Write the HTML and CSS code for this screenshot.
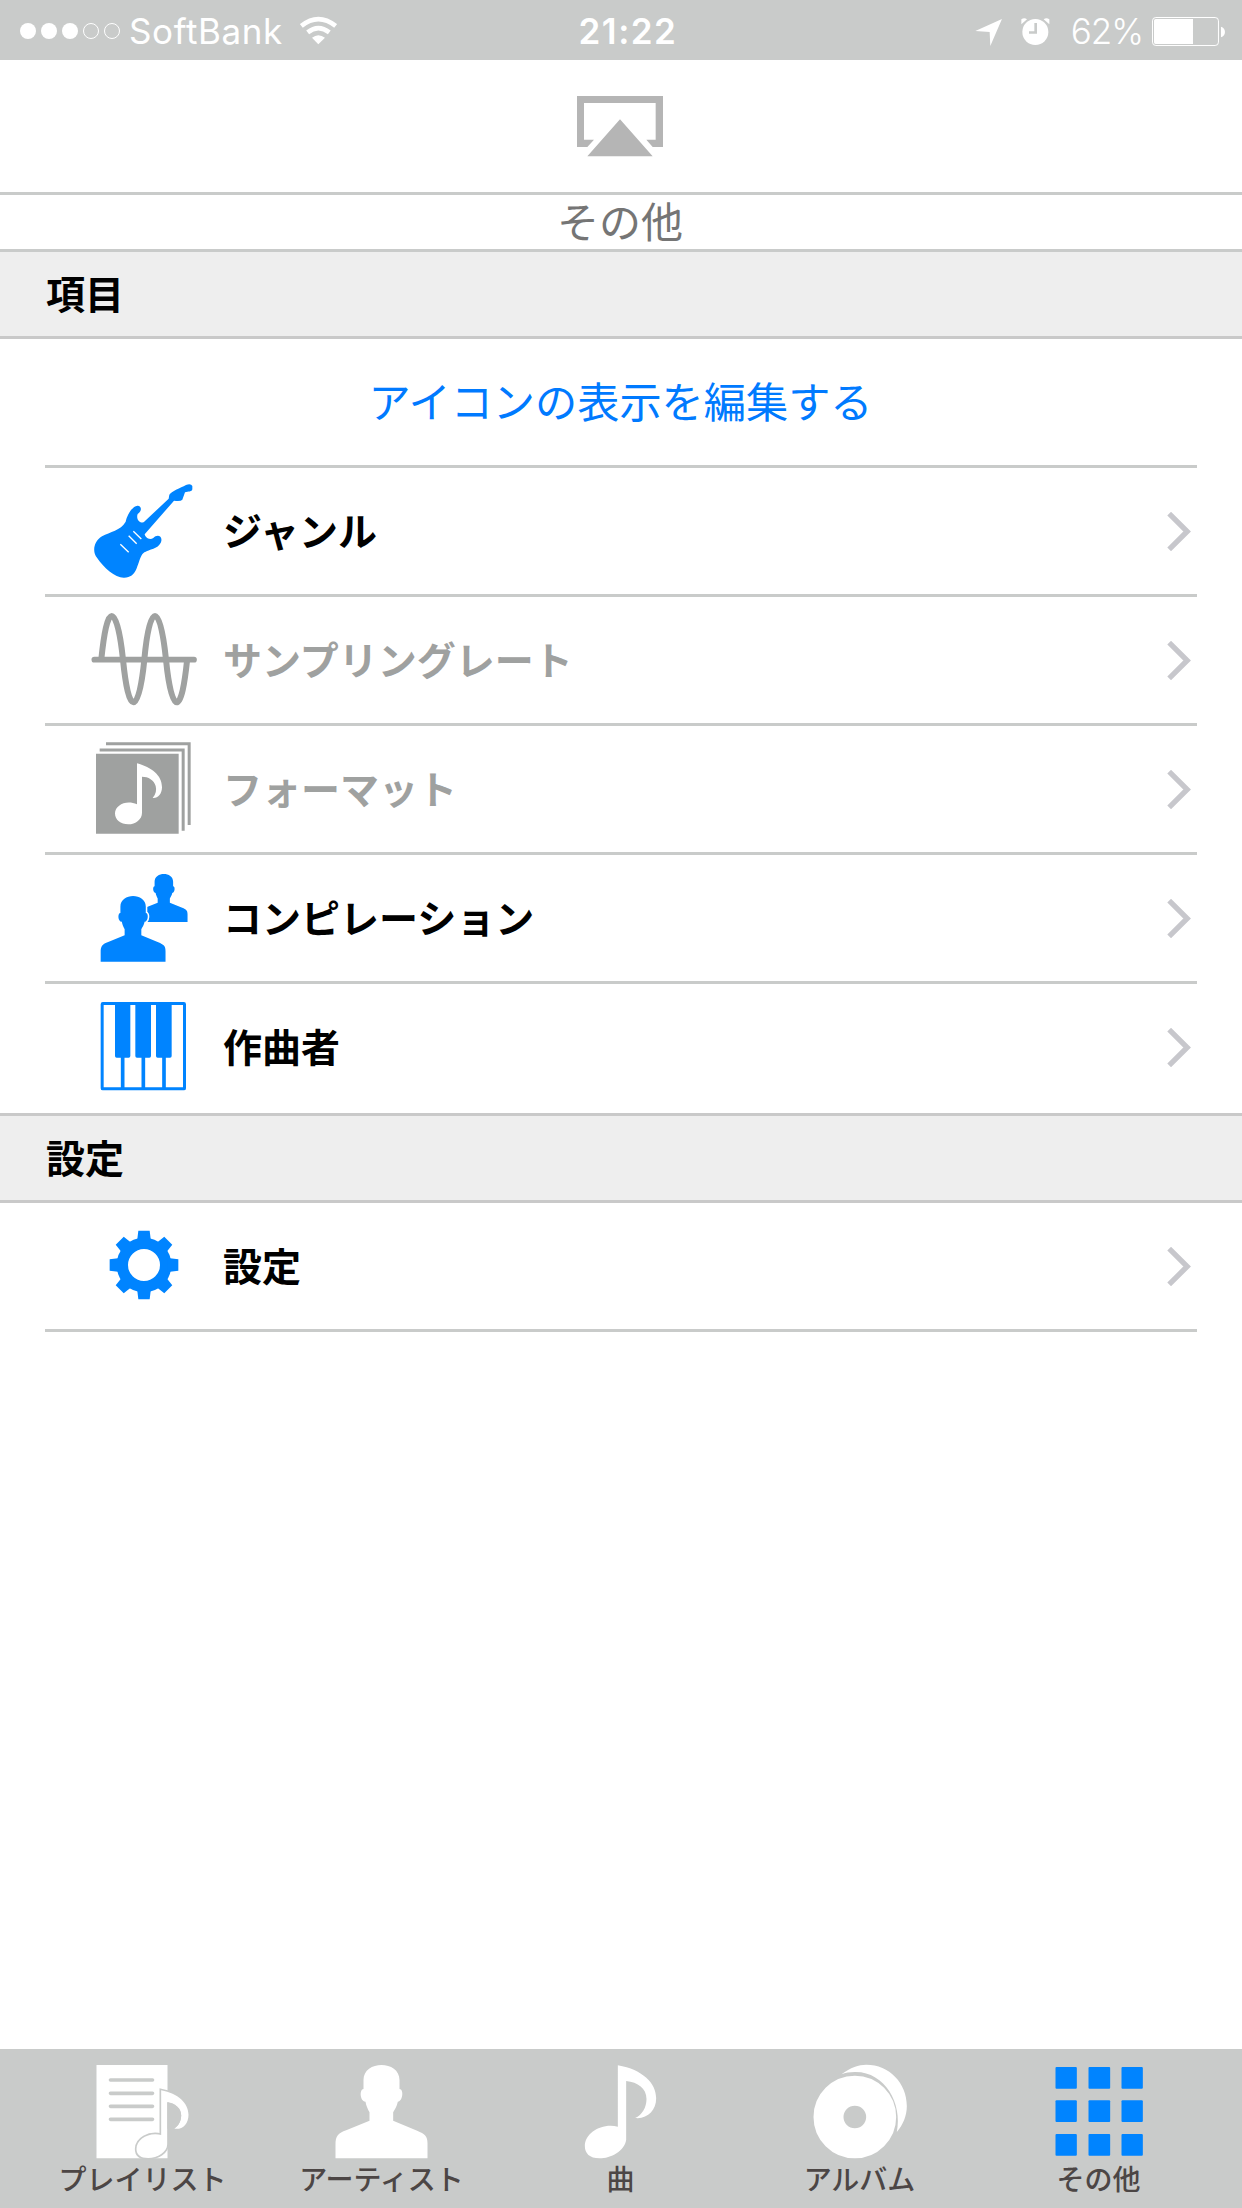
FILE: index.html
```html
<!DOCTYPE html>
<html lang="ja">
<head>
<meta charset="utf-8">
<title>その他</title>
<link rel="stylesheet" href="styles.css">
</head>
<body>
<svg class="defs" width="0" height="0" aria-hidden="true">
  <defs>
    <path id="person" d="M138 0C165 0 192 15 192 45V72C205 72 203 108 187 110C184 125 178 132 173 142V167L245 197C268 207 276 212 276 235V280H0V240C0 212 8 205 32 196L102 167V142C97 132 92 122 90 110C72 108 72 72 84 72V45C84 15 111 0 138 0Z"/>
    <path id="chevron" d="M147.500 161L201.500 214.500L147.500 268" fill="none" stroke="#c7c7cc" stroke-width="16"/>
  </defs>
</svg>
<div class="screen">
  <header class="status">
    <div class="status-left">
      <svg class="signal" viewBox="60 0 300 180"><g fill="#fff"><circle cx="84" cy="90" r="24"/><circle cx="147" cy="90" r="24"/><circle cx="210" cy="90" r="24"/></g><g fill="none" stroke="#fff" stroke-width="3"><circle cx="273" cy="90" r="22.500"/><circle cx="336" cy="90" r="22.500"/></g></svg>
      <span class="carrier">SoftBank</span>
      <svg class="wifi" viewBox="900 0 112 180"><g fill="none" stroke="#fff" stroke-width="14"><path d="M904 75Q955 34 1007 75"/><path d="M923 94Q955 69 988 94"/></g><path fill="#fff" d="M936 110Q955 95 975 110L955 130Z"/></svg>
    </div>
    <div class="time">21:22</div>
    <div class="status-right">
      <svg class="location" viewBox="225 0 82 180"><path fill="#fff" d="M306 54L226 90L269 93L271 135Z"/></svg>
      <svg class="alarm" viewBox="365 0 86 180"><g fill="#fff"><circle cx="408" cy="93" r="39"/><path d="M366 70V55Q375 48 383 55ZM450 70V55Q441 48 433 55Z"/></g><path d="M409 66V94.500H389" fill="none" stroke="#c9cbca" stroke-width="8"/></svg>
      <span class="percent">62%</span>
      <svg class="battery" viewBox="756 0 220 180"><rect x="757.500" y="49.500" width="198" height="84" rx="10" fill="none" stroke="#fff" stroke-width="3"/><path fill="#fff" d="M767 54H879V129H767Q762 129 762 124V59Q762 54 767 54ZM963 77Q975 81 975 93T963 109Z"/></svg>
    </div>
  </header>

  <div class="player">
    <svg class="airplay" viewBox="172 287 258 182"><path fill="#b5b5b5" d="M172 287H430V440H399L380 418H408V308H193V418H223L203 440H172ZM301 357L399 468H203Z"/></svg>
  </div>
  <h1 class="title">その他</h1>

  <h2 class="section">項目</h2>
  <ul class="list">
    <li class="row edit"><a class="link">アイコンの表示を編集する</a></li>
    <li class="row">
      <svg class="icon" viewBox="252 684 360 378"><path fill="#0084ff" d="M508 764L506 776L431 847C421 850 407 839 413 822C428 812 424 796 412 797C397 798 381 826 377 845C362 872 330 875 306 889C281 904 276 936 291 953C311 983 345 1013 371 1013C412 1014 410 974 425 946C435 926 477 932 484 903C487 886 470 883 460 894C447 902 435 891 434 883L522 782Q542 785 547 779L555 757C565 754 576 756 577 748V738Q573 730 558 735C540 744 517 753 508 764Z"/><path stroke="#fff" stroke-width="4" d="M361 913L386 937M386 887L410 911M400 874L424 897"/></svg>
      <span class="label">ジャンル</span><svg class="chevron" viewBox="141 156 72 117"><use href="#chevron"/></svg>
    </li>
    <li class="row disabled">
      <svg class="icon" viewBox="12 21 360 378"><g fill="none" stroke="#9fa1a0" stroke-linecap="round" stroke-linejoin="round"><path stroke-width="17" d="M43 209H342"/><path stroke-width="18" d="M64 207C72 130 82 78 95 78C110 78 122 140 129 209C137 290 148 337 160 337C175 337 186 280 193 209C200 130 211 78 225 78C240 78 251 140 258 209C266 290 278 337 290 337C304 337 314 280 321 213"/></g></svg>
      <span class="label">サンプリングレート</span><svg class="chevron" viewBox="141 156 72 117"><use href="#chevron"/></svg>
    </li>
    <li class="row disabled">
      <svg class="icon" viewBox="12 408 360 378"><path fill="#9fa1a0" d="M48 491H296V731H48Z"/><path fill="none" stroke="#9fa1a0" stroke-width="9" d="M78 461.500H327.500V705M59 480H309.500V722"/><path fill="#fff" d="M171 520C215 533 246 555 246 592C246 612 233 626 218 624C228 612 230 600 227 588C222 570 205 560 186 560V668C186 688 167 703 145 703C122 703 105 690 105 670C105 645 140 628 171 643Z"/></svg>
      <span class="label">フォーマット</span><svg class="chevron" viewBox="141 156 72 117"><use href="#chevron"/></svg>
    </li>
    <li class="row">
      <svg class="icon" viewBox="12 15 360 378"><clipPath id="back"><path d="M201 60H340V217H201Z"/></clipPath><g clip-path="url(#back)"><use href="#person" fill="#0084ff" transform="translate(180.500 72) scale(.515)"/></g><use href="#person" fill="#0084ff" stroke="#fff" stroke-width="13" paint-order="stroke" transform="translate(62 138) scale(.705)"/></svg>
      <span class="label">コンピレーション</span><svg class="chevron" viewBox="141 156 72 117"><use href="#chevron"/></svg>
    </li>
    <li class="row tall">
      <svg class="icon" viewBox="12 402 360 378"><g fill="none" stroke="#0084ff"><rect x="66.500" y="460.500" width="247" height="256" rx="2" stroke-width="9"/><path stroke-width="11" d="M128 620V716M190 620V716M252 620V716"/></g><path fill="#0084ff" d="M105 458H151V618Q151 623 146 623H110Q105 623 105 618ZM166 458H213V618Q213 623 208 623H171Q166 623 166 618ZM228 458H275V618Q275 623 270 623H233Q228 623 228 618Z"/></svg>
      <span class="label">作曲者</span><svg class="chevron" viewBox="141 156 72 117"><use href="#chevron"/></svg>
    </li>
  </ul>

  <h2 class="section">設定</h2>
  <ul class="list last">
    <li class="row">
      <svg class="icon" viewBox="252 309 360 378"><circle cx="432" cy="495" r="65" fill="none" stroke="#0084ff" stroke-width="34"/><g fill="#0084ff"><path id="tooth" d="M415 392H449L452 417L464 424H400L412 417Z"/><use href="#tooth" transform="rotate(45 432 495)"/><use href="#tooth" transform="rotate(90 432 495)"/><use href="#tooth" transform="rotate(135 432 495)"/><use href="#tooth" transform="rotate(180 432 495)"/><use href="#tooth" transform="rotate(225 432 495)"/><use href="#tooth" transform="rotate(270 432 495)"/><use href="#tooth" transform="rotate(315 432 495)"/></g></svg>
      <span class="label">設定</span><svg class="chevron" viewBox="141 156 72 117"><use href="#chevron"/></svg>
    </li>
  </ul>

  <nav class="tabs">
    <a class="tab">
      <svg class="tab-icon" viewBox="70.500 57 717 342"><path fill="#fff" d="M291 105H504V385H291Z"/><path stroke="#c9cbca" stroke-width="11" stroke-linecap="round" d="M333 150H459M333 190H459M333 229H459M333 268H459"/><path fill="#fff" stroke="#c9cbca" stroke-width="10" paint-order="stroke" d="M485 181C536 190 567 220 567 254C567 282 549 300 524 296C538 287 545 272 545 256C545 234 525 221 503 217V343C503 367 474 384 446 384C423 384 411 374 411 357C411 328 447 306 485 315Z"/><path fill="#c9cbca" d="M504 216C526 220 545 234 545 256C545 272 538 287 524 296H504Z"/></svg>
      <span>プレイリスト</span>
    </a>
    <a class="tab">
      <svg class="tab-icon" viewBox="787.500 57 717 342"><use href="#person" fill="#fff" transform="translate(1008 105)"/></svg>
      <span>アーティスト</span>
    </a>
    <a class="tab">
      <svg class="tab-icon" viewBox="4.500 57 717 342"><path fill="#fff" d="M355 106C430 119 470 160 470 205C470 242 443 268 407 264C428 255 441 232 441 207C441 175 415 157 380 153V329C376 362 334 385 300 385C270 385 256 370 256 348C256 310 305 278 355 290Z"/></svg>
      <span>曲</span>
    </a>
    <a class="tab">
      <svg class="tab-icon" viewBox="721.500 57 717 342"><path fill="#fff" d="M1026 133C1053 112 1078 104 1100 104C1170 104 1222 160 1222 228C1222 258 1210 285 1192 306C1210 220 1155 124 1066 126C1050 126 1038 128 1026 133Z"/><circle cx="1066" cy="261" r="79" fill="none" stroke="#fff" stroke-width="90"/></svg>
      <span>アルバム</span>
    </a>
    <a class="tab">
      <svg class="tab-icon" viewBox="88.500 57 717 342"><g fill="#0084ff"><rect x="318" y="111" width="64" height="65" rx="3"/><rect x="417" y="111" width="65" height="65" rx="3"/><rect x="516" y="111" width="64" height="65" rx="3"/><rect x="318" y="211" width="64" height="65" rx="3"/><rect x="417" y="211" width="65" height="65" rx="3"/><rect x="516" y="211" width="64" height="65" rx="3"/><rect x="318" y="312" width="64" height="65" rx="3"/><rect x="417" y="312" width="65" height="65" rx="3"/><rect x="516" y="312" width="64" height="65" rx="3"/></g></svg>
      <span>その他</span>
    </a>
  </nav>
</div>
</body>
</html>
```
FILE: styles.css
```css
* { box-sizing: border-box; }
body { margin: 0; background: #fff; color: #000; font-family: "Noto Sans CJK JP", sans-serif; }
svg { display: block; flex: none; }
.defs { position: absolute; }
.screen { width: 1242px; height: 2208px; display: flex; flex-direction: column; overflow: hidden; }

.status { height: 60px; background: #c9cbca; color: #fff; display: grid; grid-template-columns: 1fr auto 1fr; align-items: center; padding: 0 17px 0 20px; font-family: Inter, "Liberation Sans", sans-serif; font-size: 36px; line-height: 60px; }
.status-left, .status-right { display: flex; align-items: center; }
.status-right { justify-content: flex-end; }
.signal { width: 100px; height: 60px; }
.carrier { margin-left: 9px; width: 152px; padding-top: 1px; font-size: 35px; font-weight: 400; letter-spacing: 0.6px; }
.wifi { width: 37.300px; height: 60px; margin-left: 19px; }
.time { font-size: 35px; font-weight: 600; padding: 1px 0 0 11px; letter-spacing: 1.500px; }
.location { width: 27.300px; height: 60px; }
.alarm { width: 28.700px; height: 60px; margin-left: 19px; }
.percent { margin-left: 21px; width: 70px; padding-top: 1px; font-size: 35px; font-weight: 350; letter-spacing: -1px; }
.battery { width: 73.300px; height: 60px; margin-left: 11px; }

.player { height: 135px; border-bottom: 3px solid #c9cbca; padding-top: 36px; }
.airplay { width: 86px; height: 60.700px; margin: 0 auto; position: relative; left: -0.700px; }
.title { height: 57px; margin: 0; padding-right: 2px; border-bottom: 3px solid #c9cbca; color: #757575; font-size: 42px; font-weight: 400; line-height: 49px; text-align: center; }

.section { height: 87px; margin: 0; padding-left: 46px; background: #eee; border-bottom: 3px solid #c9c9c9; font-size: 39px; font-weight: 700; line-height: 80px; }
.list { list-style: none; margin: 0; padding: 0 45px; border-bottom: 3px solid #c9c9c9; }
.list.last { border-bottom: 0; }
.row { height: 129px; display: flex; align-items: center; border-bottom: 3px solid #c9cbca; font-size: 39px; font-weight: 700; }
.row.tall { border-bottom: 0; padding-bottom: 3px; }
.row.disabled { color: #9fa1a0; }
.row.edit { justify-content: center; color: #007aff; font-size: 42.200px; font-weight: 400; }
.link { padding: 0 1px 5px 0; }
.icon { width: 120px; height: 126px; margin-left: 39px; }
.label { flex: 1; margin-left: 19px; padding-bottom: 5px; }
.chevron { width: 24px; height: 39px; margin-right: 6px; }

.tabs { height: 159px; margin-top: auto; padding: 0 24px 0 23px; background: #c9cbca; color: #4c4645; display: flex; }
.tab { width: 239px; display: flex; flex-direction: column; align-items: center; font-size: 28px; font-weight: 500; line-height: 31px; }
.tab-icon { width: 239px; height: 114px; }
```
